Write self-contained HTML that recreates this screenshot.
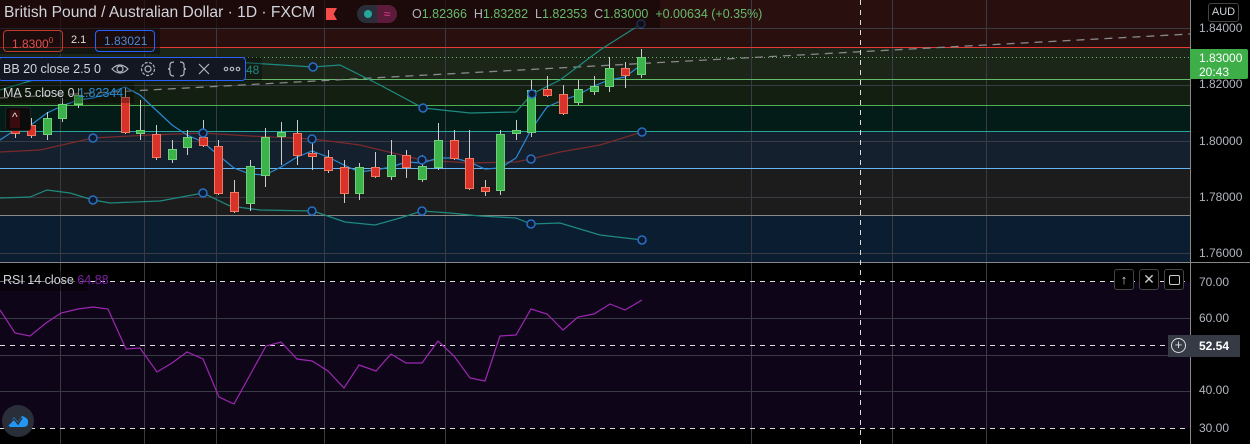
<!DOCTYPE html>
<html><head><meta charset="utf-8"><style>
*{margin:0;padding:0;box-sizing:border-box}
body{width:1250px;height:444px;background:#000;overflow:hidden;font-family:"Liberation Sans",sans-serif;position:relative}
.ab{position:absolute}
.ax{position:absolute;left:1199px;font-size:12px;color:#b2b5be}
</style></head><body>
<svg class="ab" style="left:0;top:0" width="1250" height="444">
<rect x="0" y="0" width="1190" height="47" fill="#2a0f0f"/>
<rect x="0" y="47" width="1190" height="32" fill="#1b2619"/>
<rect x="0" y="79" width="1190" height="26" fill="#131f10"/>
<rect x="0" y="105" width="1190" height="26" fill="#031c17"/>
<rect x="0" y="131" width="1190" height="37" fill="#15202e"/>
<rect x="0" y="168" width="1190" height="47" fill="#1c1c1c"/>
<rect x="0" y="215" width="1190" height="47" fill="#0b1e31"/>
<rect x="0" y="282" width="1190" height="146" fill="#0f0519"/>
<g stroke="#3a3a44" stroke-width="1">
<line x1="0" y1="28.5" x2="1190" y2="28.5"/><line x1="0" y1="85.5" x2="1190" y2="85.5"/><line x1="0" y1="141.5" x2="1190" y2="141.5"/><line x1="0" y1="197.5" x2="1190" y2="197.5"/><line x1="0" y1="253.5" x2="1190" y2="253.5"/>
<line x1="0" y1="318.5" x2="1190" y2="318.5"/><line x1="0" y1="355.5" x2="1190" y2="355.5"/><line x1="0" y1="391.5" x2="1190" y2="391.5"/>
<line x1="60.5" y1="0" x2="60.5" y2="444"/><line x1="144.5" y1="0" x2="144.5" y2="444"/><line x1="216.5" y1="0" x2="216.5" y2="444"/><line x1="324.5" y1="0" x2="324.5" y2="444"/><line x1="445.5" y1="0" x2="445.5" y2="444"/><line x1="751.5" y1="0" x2="751.5" y2="444"/><line x1="892.5" y1="0" x2="892.5" y2="444"/><line x1="986.5" y1="0" x2="986.5" y2="444"/>
</g>
<line x1="0" y1="47.5" x2="1190" y2="47.5" stroke="#e53935"/>
<line x1="0" y1="57.5" x2="1190" y2="57.5" stroke="#66bb6a" stroke-dasharray="1 3"/>
<line x1="0" y1="79.5" x2="1190" y2="79.5" stroke="#66bb6a"/>
<line x1="0" y1="105.5" x2="1190" y2="105.5" stroke="#4caf50"/>
<line x1="0" y1="131.5" x2="1190" y2="131.5" stroke="#26a69a"/>
<line x1="0" y1="168.5" x2="1190" y2="168.5" stroke="#64b5f6"/>
<line x1="0" y1="215.5" x2="1190" y2="215.5" stroke="#888"/>
<line x1="0" y1="262.5" x2="1250" y2="262.5" stroke="#888"/>
<line x1="1190.5" y1="0" x2="1190.5" y2="444" stroke="#888"/>
<line x1="0" y1="98" x2="1190" y2="34" stroke="#888" stroke-dasharray="8 6" stroke-width="1.3"/>
<g stroke="#ddd" stroke-dasharray="5 5"><line x1="0" y1="281.5" x2="1190" y2="281.5"/><line x1="0" y1="428.5" x2="1190" y2="428.5"/><line x1="0" y1="345.5" x2="1190" y2="345.5"/><line x1="860.5" y1="0" x2="860.5" y2="444"/></g>
<polyline fill="none" stroke="#1f8a80" stroke-width="1.2" points="0,90 40,78 80,66 120,62 200,60 250,63 313,67 340,65 380,85 423,108 470,113 516,112 532,94 560,80 600,50 641,24"/>
<polyline fill="none" stroke="#7a2a2a" stroke-width="1.2" points="0,152 40,150 93,138 150,135 203,133 250,136 313,139 360,145 422,160 470,163 516,162 531,159 560,152 600,145 642,132"/>
<polyline fill="none" stroke="#1f8a80" stroke-width="1.2" points="0,198 30,197 47,190 70,193 93,200 110,203 160,201 203,193 230,206 260,210 313,211 345,222 375,225 400,218 422,211 450,213 480,216 516,218 531,224 560,223 600,235 642,240"/>
<polyline fill="none" stroke="#2a8ad4" stroke-width="1.2" points="0,140 15,130 31,125 47,113 62,106 78,100 93,98 109,93 125,87 140,95 156,110 172,125 187,135 203,142 218,155 234,168 250,174 265,175 281,167 297,157 312,151 328,157 344,165 359,172 375,170 391,167 406,162 422,163 438,158 454,158 469,162 485,169 500,168 516,158 531,130 547,107 563,100 578,95 594,86 609,80 625,77 641,65"/>
<g stroke-width="1">
<g stroke="#ccc">
<line x1="15.5" y1="118" x2="15.5" y2="138"/><line x1="31.5" y1="118" x2="31.5" y2="138"/><line x1="47.5" y1="112" x2="47.5" y2="140"/><line x1="62.5" y1="98" x2="62.5" y2="122"/><line x1="78.5" y1="88" x2="78.5" y2="108"/><line x1="125.5" y1="88" x2="125.5" y2="134"/><line x1="140.5" y1="100" x2="140.5" y2="140"/><line x1="156.5" y1="125" x2="156.5" y2="160"/><line x1="172.5" y1="140" x2="172.5" y2="163"/><line x1="187.5" y1="130" x2="187.5" y2="155"/><line x1="203.5" y1="120" x2="203.5" y2="147"/><line x1="218.5" y1="140" x2="218.5" y2="195"/><line x1="234.5" y1="180" x2="234.5" y2="213"/><line x1="250.5" y1="160" x2="250.5" y2="211"/><line x1="265.5" y1="128" x2="265.5" y2="187"/><line x1="281.5" y1="122" x2="281.5" y2="165"/><line x1="297.5" y1="120" x2="297.5" y2="165"/><line x1="312.5" y1="140" x2="312.5" y2="170"/><line x1="328.5" y1="150" x2="328.5" y2="173"/><line x1="344.5" y1="160" x2="344.5" y2="203"/><line x1="359.5" y1="163" x2="359.5" y2="200"/><line x1="375.5" y1="152" x2="375.5" y2="178"/><line x1="391.5" y1="140" x2="391.5" y2="180"/><line x1="406.5" y1="150" x2="406.5" y2="178"/><line x1="422.5" y1="155" x2="422.5" y2="182"/><line x1="438.5" y1="123" x2="438.5" y2="170"/><line x1="454.5" y1="130" x2="454.5" y2="160"/><line x1="469.5" y1="130" x2="469.5" y2="190"/><line x1="485.5" y1="180" x2="485.5" y2="196"/><line x1="500.5" y1="130" x2="500.5" y2="195"/><line x1="516.5" y1="120" x2="516.5" y2="140"/><line x1="531.5" y1="80" x2="531.5" y2="137"/><line x1="547.5" y1="76" x2="547.5" y2="97"/><line x1="563.5" y1="85" x2="563.5" y2="115"/><line x1="578.5" y1="80" x2="578.5" y2="105"/><line x1="594.5" y1="76" x2="594.5" y2="95"/><line x1="609.5" y1="57" x2="609.5" y2="92"/><line x1="625.5" y1="62" x2="625.5" y2="88"/><line x1="641.5" y1="49" x2="641.5" y2="78"/>
</g>
<g fill="#3bb34a" stroke="#6fd07a">
<rect x="43.5" y="118.5" width="8" height="16"/><rect x="58.5" y="104.5" width="8" height="14"/><rect x="74.5" y="95.5" width="8" height="9"/><rect x="136.5" y="130.5" width="8" height="3"/><rect x="168.5" y="149.5" width="8" height="10"/><rect x="183.5" y="137.5" width="8" height="10"/><rect x="246.5" y="166.5" width="8" height="37"/><rect x="261.5" y="137.5" width="8" height="38"/><rect x="277.5" y="132.5" width="8" height="4"/><rect x="355.5" y="167.5" width="8" height="26"/><rect x="387.5" y="155.5" width="8" height="21"/><rect x="418.5" y="166.5" width="8" height="13"/><rect x="434.5" y="140.5" width="8" height="27"/><rect x="496.5" y="134.5" width="8" height="56"/><rect x="512.5" y="130.5" width="8" height="3"/><rect x="527.5" y="90.5" width="8" height="42"/><rect x="574.5" y="89.5" width="8" height="13"/><rect x="590.5" y="86.5" width="8" height="5"/><rect x="605.5" y="68.5" width="8" height="18"/><rect x="637.5" y="57.5" width="8" height="17"/>
</g>
<g fill="#d8322a" stroke="#f07a60">
<rect x="11.5" y="125.5" width="8" height="8"/><rect x="27.5" y="125.5" width="8" height="10"/><rect x="121.5" y="97.5" width="8" height="35"/><rect x="152.5" y="134.5" width="8" height="23"/><rect x="199.5" y="137.5" width="8" height="8"/><rect x="214.5" y="146.5" width="8" height="47"/><rect x="230.5" y="192.5" width="8" height="19"/><rect x="293.5" y="133.5" width="8" height="22"/><rect x="308.5" y="153.5" width="8" height="3"/><rect x="324.5" y="157.5" width="8" height="13"/><rect x="340.5" y="167.5" width="8" height="26"/><rect x="371.5" y="167.5" width="8" height="9"/><rect x="402.5" y="155.5" width="8" height="12"/><rect x="450.5" y="140.5" width="8" height="18"/><rect x="465.5" y="158.5" width="8" height="30"/><rect x="481.5" y="187.5" width="8" height="4"/><rect x="543.5" y="89.5" width="8" height="6"/><rect x="559.5" y="94.5" width="8" height="19"/><rect x="621.5" y="68.5" width="8" height="7"/>
</g>
</g>
<g fill="#0b1a33" stroke="#2a6fc0" stroke-width="1.5">
<circle cx="313" cy="67" r="4"/><circle cx="423" cy="108" r="4"/><circle cx="532" cy="94" r="4"/><circle cx="641" cy="24" r="4"/>
<circle cx="93" cy="138" r="4"/><circle cx="203" cy="133" r="4"/><circle cx="312" cy="139" r="4"/><circle cx="422" cy="160" r="4"/><circle cx="531" cy="159" r="4"/><circle cx="642" cy="132" r="4"/>
<circle cx="93" cy="200" r="4"/><circle cx="203" cy="193" r="4"/><circle cx="312" cy="211" r="4"/><circle cx="422" cy="211" r="4"/><circle cx="531" cy="224" r="4"/><circle cx="642" cy="240" r="4"/>
</g>
<polyline fill="none" stroke="#9c27b0" stroke-width="1.2" points="0,310 15,333 30,336 46,323 61,313 78,309 93,307 108,309 126,349 140,348 157,372 172,363 187,352 203,359 219,397 234,404 250,375 266,346 281,342 297,359 312,361 328,371 344,388 359,365 376,371 391,354 406,363 422,363 438,341 454,356 470,378 485,381 500,336 516,335 531,309 547,314 563,330 578,317 594,314 610,304 625,310 642,300"/>
</svg>

<div class="ab" style="left:0;top:0;height:28px;width:660px;background:rgba(20,5,5,.6)"></div>
<div class="ab" style="left:4px;top:4px;font-size:15.6px;color:#d1d4dc;white-space:nowrap">British Pound / Australian Dollar · 1D · FXCM</div>
<div class="ab" style="left:326px;top:8px;width:11px;height:12px;background:#f44b4b;clip-path:polygon(0 0,100% 0,70% 50%,100% 100%,0 100%)"></div>
<div class="ab" style="left:357px;top:5px;width:40px;height:18px;border-radius:9px;background:#2a2e39"></div>
<div class="ab" style="left:377px;top:5px;width:20px;height:18px;border-radius:0 9px 9px 0;background:#5c1b3a;color:#e0408a;font-size:12px;text-align:center;line-height:18px">≈</div>
<div class="ab" style="left:364px;top:10px;width:8px;height:8px;border-radius:50%;background:#26a69a"></div>
<div class="ab" style="left:412px;top:7px;font-size:12.5px;color:#b2b5be;white-space:nowrap">O<span style="color:#66bb6a">1.82366</span> &nbsp;H<span style="color:#66bb6a">1.83282</span> &nbsp;L<span style="color:#66bb6a">1.82353</span> &nbsp;C<span style="color:#66bb6a">1.83000</span> &nbsp;<span style="color:#66bb6a">+0.00634 (+0.35%)</span></div>

<div class="ab" style="left:0;top:28px;width:160px;height:26px;background:rgba(10,10,10,.5)"></div>
<div class="ab" style="left:3px;top:30px;width:60px;height:22px;border:1px solid #c0392b;border-radius:4px;color:#e05050;font-size:12px;line-height:20px;padding-left:8px">1.8300<sup style="font-size:8px">0</sup></div>
<div class="ab" style="left:71px;top:34px;font-size:11px;color:#ddd">2.1</div>
<div class="ab" style="left:95px;top:30px;width:60px;height:22px;border:1px solid #2962ff;border-radius:4px;color:#4c8ad8;font-size:12px;line-height:20px;padding-left:8px">1.83021</div>

<div class="ab" style="left:0;top:57px;width:262px;height:24px;background:rgba(0,0,0,.3)"></div>
<div class="ab" style="left:-2px;top:57px;width:248px;height:24px;background:#131722;border:1px solid #2962ff;border-radius:4px"></div>
<div class="ab" style="left:3px;top:62px;font-size:12.5px;color:#d1d4dc">BB 20 close 2.5 0</div>
<svg class="ab" style="left:110px;top:60px" width="135" height="18" fill="none" stroke="#b2b5be" stroke-width="1.2">
<path d="M2 9 Q10 1 18 9 Q10 17 2 9Z"/><circle cx="10" cy="9" r="3"/>
<circle cx="38" cy="9" r="3"/><circle cx="38" cy="9" r="6.5" stroke-dasharray="3 1.5"/>
<path d="M64 2 Q60 2 60 5 L60 7 Q60 9 58 9 Q60 9 60 11 L60 13 Q60 16 64 16 M70 2 Q74 2 74 5 L74 7 Q74 9 76 9 Q74 9 74 11 L74 13 Q74 16 70 16"/>
<path d="M89 4 L99 14 M99 4 L89 14"/>
<circle cx="116" cy="9" r="1.7"/><circle cx="122" cy="9" r="1.7"/><circle cx="128" cy="9" r="1.7"/>
</svg>
<div class="ab" style="left:246px;top:63px;font-size:12px;color:#1f8a80">48</div>
<div class="ab" style="left:0;top:83px;width:134px;height:20px;background:rgba(0,0,0,.3)"></div>
<div class="ab" style="left:3px;top:86px;font-size:12.5px;color:#d1d4dc">MA 5 close 0 <span style="color:#2a8ad4">1.82344</span></div>
<div class="ab" style="left:5px;top:107px;width:26px;height:24px;background:#0c0c0c;border:1px solid #222;border-radius:3px"></div>
<div class="ab" style="left:10px;top:110px;width:10px;height:18px;background:#3a0c10"></div>
<div class="ab" style="left:12px;top:110px;font-size:12px;color:#ddd">^</div>

<div class="ab" style="left:0;top:271px;width:88px;height:20px;background:rgba(0,0,0,.5)"></div>
<div class="ab" style="left:3px;top:273px;font-size:12.5px;color:#d1d4dc">RSI 14 close <span style="color:#7b1fa2">64.88</span></div>
<div class="ab" style="left:2px;top:405px;width:32px;height:32px;border-radius:50%;background:#2a2e39"></div>
<svg class="ab" style="left:7px;top:412px" width="22" height="16"><path d="M1 13 L7 5 L11 10 L15 4 Q22 6 21 11 Q21 15 16 15 L3 15Z" fill="#2196f3"/><path d="M1 13 L7 7 L11 12 L15 6" fill="none" stroke="#2a2e39" stroke-width="1.5"/></svg>

<div class="ab" style="left:1114px;top:269px;width:20px;height:21px;border:1px solid #444;border-radius:3px;background:#000;color:#ccc;font-size:13px;text-align:center;line-height:19px">↑</div>
<div class="ab" style="left:1139px;top:269px;width:20px;height:21px;border:1px solid #444;border-radius:3px;background:#000;color:#ccc;font-size:14px;text-align:center;line-height:19px">✕</div>
<div class="ab" style="left:1164px;top:269px;width:20px;height:21px;border:1px solid #444;border-radius:3px;background:#000"><div style="margin:5px 4px;width:11px;height:10px;border:1.3px solid #ccc;border-radius:2px"></div></div>

<div class="ab" style="left:1208px;top:3px;width:31px;height:19px;border:1px solid #444;border-radius:3px;color:#d1d4dc;font-size:11px;text-align:center;line-height:17px">AUD</div>
<div class="ax" style="top:21px">1.84000</div>
<div class="ax" style="top:77px">1.82000</div>
<div class="ax" style="top:134px">1.80000</div>
<div class="ax" style="top:190px">1.78000</div>
<div class="ax" style="top:246px">1.76000</div>
<div class="ax" style="top:275px">70.00</div>
<div class="ax" style="top:311px">60.00</div>
<div class="ax" style="top:383px">40.00</div>
<div class="ax" style="top:421px">30.00</div>
<div class="ab" style="left:1190px;top:49px;width:58px;height:30px;background:#3dae48;border-radius:0 2px 2px 0;color:#fff;font-size:12px;line-height:14px;padding:2px 0 0 9px">1.83000<br>20:43</div>
<div class="ab" style="left:1168px;top:335px;width:72px;height:22px;background:#363a45"></div>
<div class="ab" style="left:1171px;top:338px;width:15px;height:15px;border:1.3px solid #ddd;border-radius:50%;color:#ddd;font-size:13px;text-align:center;line-height:12px">+</div>
<div class="ab" style="left:1199px;top:339px;font-size:12px;color:#fff;font-weight:bold">52.54</div>
</body></html>
